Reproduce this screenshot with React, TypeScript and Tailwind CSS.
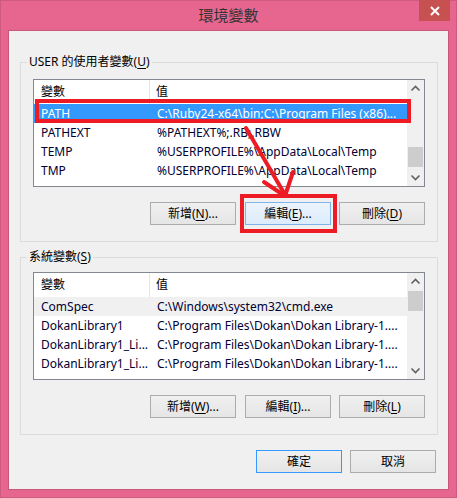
const FONT = "font-['Noto_Sans','Noto_Sans_CJK_TC',sans-serif]";

function Mn({ children }: { children: string }) {
  return <span className="underline underline-offset-2">{children}</span>;
}

function Btn({
  children,
  variant = "normal",
  className = "",
}: {
  children: React.ReactNode;
  variant?: "normal" | "hover" | "default";
  className?: string;
}) {
  const look =
    variant === "hover"
      ? "border-[#7eb4ea] bg-gradient-to-b from-[#ecf4fc] to-[#dcecfc]"
      : variant === "default"
        ? "border-[#3399ff] bg-gradient-to-b from-[#f0f0f0] to-[#e5e5e5]"
        : "border-[#acacac] bg-gradient-to-b from-[#f0f0f0] to-[#e5e5e5]";
  return (
    <button
      className={`flex h-[23px] w-[86px] items-center justify-center border text-[12px] text-black ${look} ${className}`}
    >
      {children}
    </button>
  );
}

function ScrollBar({ thumbTop }: { thumbTop: number }) {
  return (
    <div className="flex w-[17px] flex-col items-center bg-[#f0f0f0]">
      <svg width="17" height="17" viewBox="0 0 17 17" className="shrink-0">
        <path d="M4.5 10.5 L8.5 6.5 L12.5 10.5" fill="none" stroke="#606060" strokeWidth="1.6" />
      </svg>
      <div className="flex w-full flex-1 flex-col px-[1px]">
        <div className="shrink-0" style={{ height: thumbTop }} />
        <div className="h-[20px] w-full bg-[#cdcdcd]" />
        <div className="flex-1" />
      </div>
      <svg width="17" height="17" viewBox="0 0 17 17" className="shrink-0">
        <path d="M4.5 6.5 L8.5 10.5 L12.5 6.5" fill="none" stroke="#606060" strokeWidth="1.6" />
      </svg>
    </div>
  );
}

type Row = { name: string; value: string; state?: "selected" | "hot" };

function VarList({ rows, thumbTop }: { rows: Row[]; thumbTop: number }) {
  return (
    <div className="ml-[12px] flex h-[108px] w-[392px] border border-[#828790] bg-white">
      <div className="flex min-w-0 flex-1 flex-col overflow-hidden">
        <div className="flex h-[24px] shrink-0 items-center text-[12px] text-black">
          <div className="flex h-full w-[116px] items-center border-r border-[#e5e5e5] pl-[7px]">變數</div>
          <div className="pl-[6px]">值</div>
        </div>
        {rows.map((r, i) => (
          <div
            key={i}
            className={`flex h-[19px] shrink-0 items-center whitespace-nowrap text-[12px] ${
              r.state === "selected"
                ? "bg-[#3399ff] text-white"
                : r.state === "hot"
                  ? "bg-[#f0f0f0] text-[#000033]"
                  : "text-[#000033]"
            }`}
          >
            <div className="w-[116px] overflow-hidden pl-[7px]">{r.name}</div>
            <div className="overflow-hidden pl-[7px]">{r.value}</div>
          </div>
        ))}
      </div>
      <ScrollBar thumbTop={thumbTop} />
    </div>
  );
}

const userRows: Row[] = [
  { name: "PATH", value: "C:\\Ruby24-x64\\bin;C:\\Program Files (x86)...", state: "selected" },
  { name: "PATHEXT", value: "%PATHEXT%;.RB;.RBW" },
  { name: "TEMP", value: "%USERPROFILE%\\AppData\\Local\\Temp" },
  { name: "TMP", value: "%USERPROFILE%\\AppData\\Local\\Temp" },
];

const systemRows: Row[] = [
  { name: "ComSpec", value: "C:\\Windows\\system32\\cmd.exe", state: "hot" },
  { name: "DokanLibrary1", value: "C:\\Program Files\\Dokan\\Dokan Library-1...." },
  { name: "DokanLibrary1_Li...", value: "C:\\Program Files\\Dokan\\Dokan Library-1...." },
  { name: "DokanLibrary1_Li...", value: "C:\\Program Files\\Dokan\\Dokan Library-1...." },
];

export default function App() {
  return (
    <div className={`relative h-[498px] w-[457px] border border-[#cf5a80] bg-[#e66690] ${FONT}`}>
      <div className="relative flex h-[29px] items-center justify-center">
        <span className="text-[15px] text-[#333]">環境變數</span>
        <div className="absolute right-[6px] top-[-1px] flex h-[21px] w-[31px] items-center justify-center bg-[#c75050]">
          <svg width="10" height="10" viewBox="0 0 10 10">
            <path d="M1 1 L9 9 M9 1 L1 9" stroke="white" strokeWidth="2" />
          </svg>
        </div>
      </div>

      <div className="ml-[7px] flex h-[460px] w-[441px] flex-col border border-[#c9577c] bg-[#f0f0f0] pl-[11px] pt-[23px]">
        <fieldset className="w-[418px] border border-[#dcdcdc] pb-[16px]">
          <legend className="ml-[6px] px-[2px] text-[12px] leading-[16px] text-black">
            USER 的使用者變數(<Mn>U</Mn>)
          </legend>
          <div className="mt-[9px]">
            <VarList rows={userRows} thumbTop={50} />
          </div>
          <div className="mt-[15px] flex justify-end pr-[12px]">
            <Btn>
              新增(<Mn>N</Mn>)...
            </Btn>
            <Btn variant="hover" className="ml-[9px]">
              編輯(<Mn>E</Mn>)...
            </Btn>
            <Btn className="ml-[8px]">
              刪除(<Mn>D</Mn>)
            </Btn>
          </div>
        </fieldset>

        <fieldset className="mt-[7px] w-[418px] border border-[#dcdcdc] pb-[16px]">
          <legend className="ml-[6px] px-[2px] text-[12px] leading-[16px] text-black">
            系統變數(<Mn>S</Mn>)
          </legend>
          <div className="mt-[7px]">
            <VarList rows={systemRows} thumbTop={1} />
          </div>
          <div className="mt-[15px] flex justify-end pr-[12px]">
            <Btn>
              新增(<Mn>W</Mn>)...
            </Btn>
            <Btn className="ml-[9px]">
              編輯(<Mn>I</Mn>)...
            </Btn>
            <Btn className="ml-[8px]">
              刪除(<Mn>L</Mn>)
            </Btn>
          </div>
        </fieldset>

        <div className="mt-[15px] flex justify-end pr-[12px]">
          <Btn variant="default">確定</Btn>
          <Btn className="ml-[8px]">取消</Btn>
        </div>
      </div>

      {/* annotations */}
      <div className="pointer-events-none absolute left-[34px] top-[98px] h-[24px] w-[376px] border-[4px] border-[#ed1c24]" />
      <div className="pointer-events-none absolute left-[239px] top-[193px] h-[39px] w-[97px] border-[4px] border-[#ed1c24]" />
      <svg className="pointer-events-none absolute left-0 top-0" width="457" height="498">
        <path d="M245 127 L283 192" stroke="#ed1c24" strokeWidth="4" strokeLinecap="round" />
        <path d="M263 181 L284 195 L292 171" fill="none" stroke="#ed1c24" strokeWidth="4" strokeLinecap="round" strokeLinejoin="round" />
      </svg>
    </div>
  );
}
